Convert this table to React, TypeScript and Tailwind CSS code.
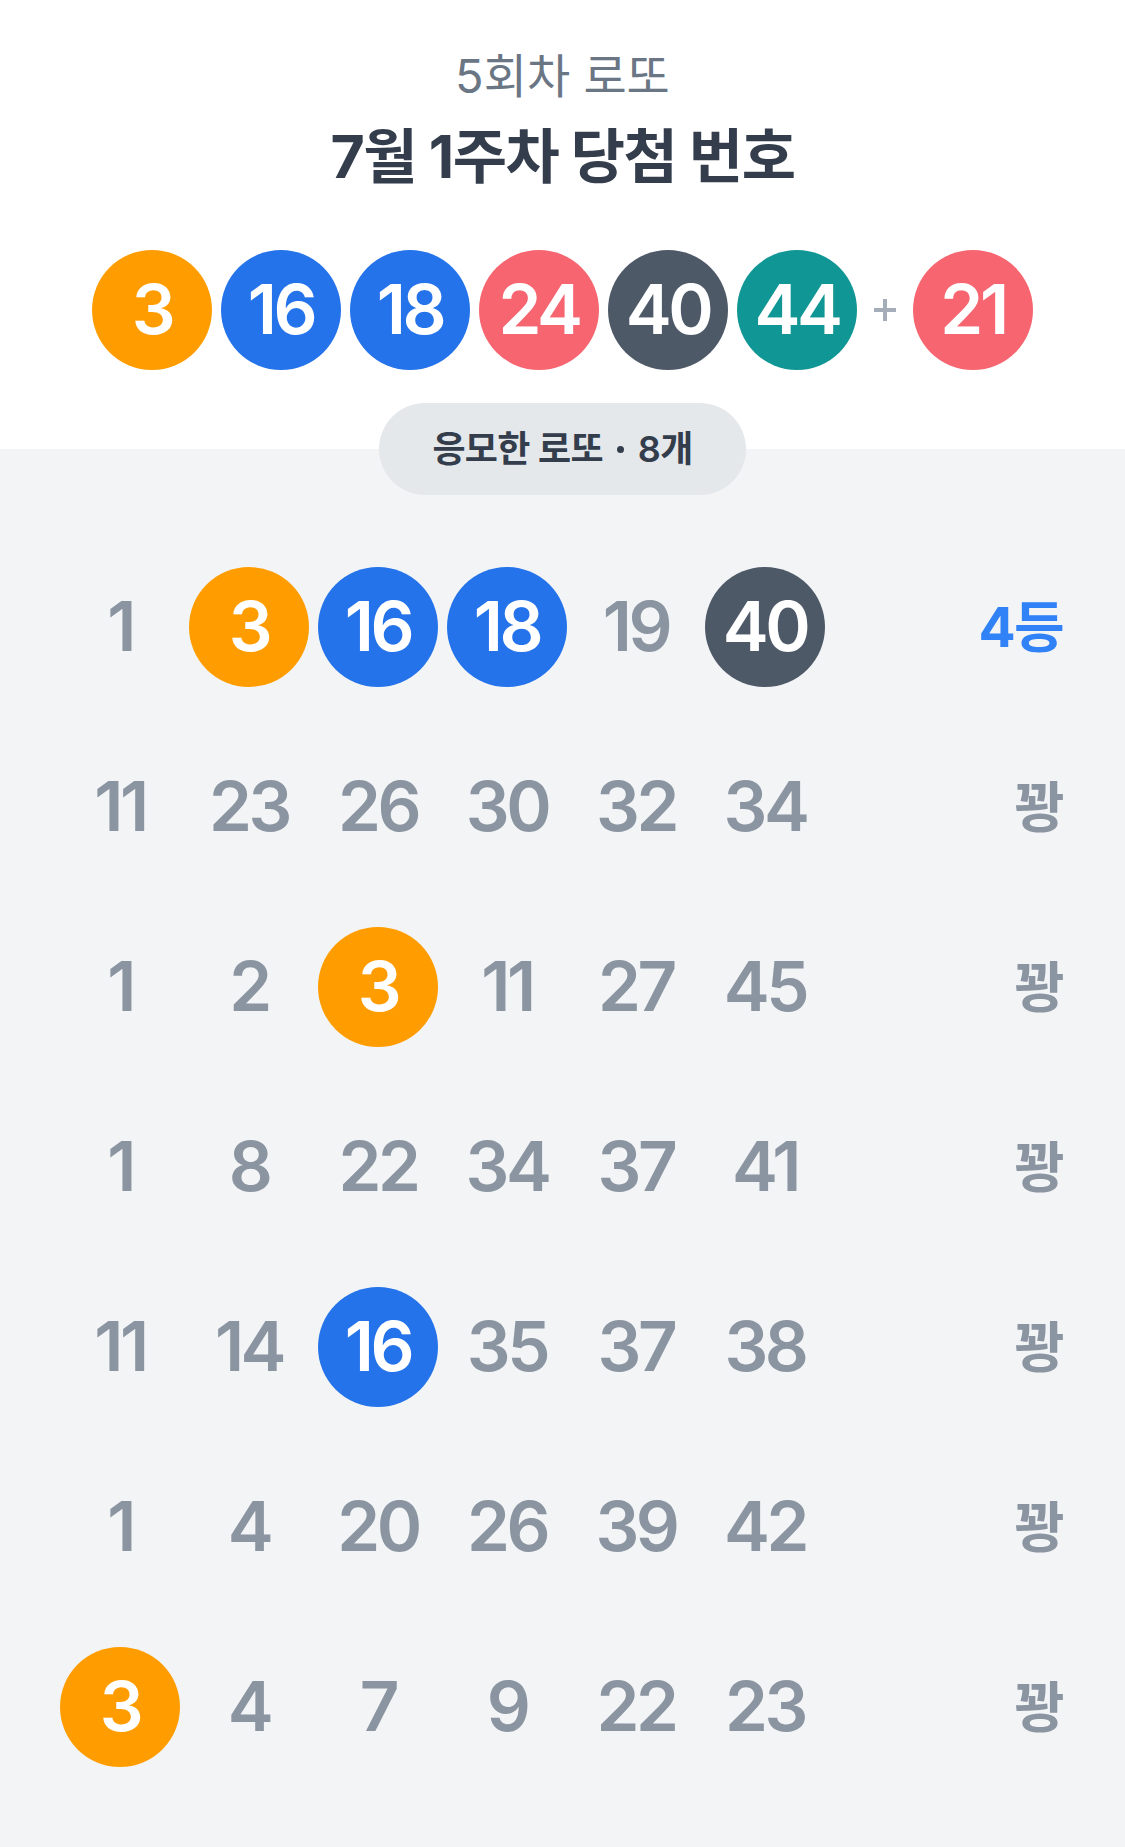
import React from "react";

const FONT = { fontFamily: 'Inter, "Noto Sans CJK KR", sans-serif' };

function ballColor(n: number): string {
  if (n <= 10) return "bg-[#ff9d00]";
  if (n <= 20) return "bg-[#2473ea]";
  if (n <= 30) return "bg-[#f66570]";
  if (n <= 40) return "bg-[#4e5968]";
  return "bg-[#109694]";
}

function Ball({ n }: { n: number }) {
  return (
    <div
      className={`w-[120px] h-[120px] rounded-full flex items-center justify-center text-white text-[69px] font-semibold tracking-[-0.05em] ${ballColor(n)}`}
    >
      {n}
    </div>
  );
}

function Plain({ n }: { n: number }) {
  return (
    <div className="w-[120px] h-[120px] flex items-center justify-center text-[#8b95a1] text-[69px] font-semibold tracking-[-0.05em]">
      {n}
    </div>
  );
}

const winning = [3, 16, 18, 24, 40, 44];
const bonus = 21;

const rows: { nums: number[]; result: string }[] = [
  { nums: [1, 3, 16, 18, 19, 40], result: "4등" },
  { nums: [11, 23, 26, 30, 32, 34], result: "꽝" },
  { nums: [1, 2, 3, 11, 27, 45], result: "꽝" },
  { nums: [1, 8, 22, 34, 37, 41], result: "꽝" },
  { nums: [11, 14, 16, 35, 37, 38], result: "꽝" },
  { nums: [1, 4, 20, 26, 39, 42], result: "꽝" },
  { nums: [3, 4, 7, 9, 22, 23], result: "꽝" },
];

export default function App() {
  return (
    <div className="min-h-screen bg-[#f2f4f6]" style={FONT}>
      <div className="bg-white pt-[48px] pb-[79px] flex flex-col items-center">
        <div className="text-[47px] leading-[56px] text-[#6b7684]">5회차 로또</div>
        <div className="mt-[19px] text-[59px] leading-[68px] font-bold text-[#333d4b] tracking-[-0.025em]">
          7월 1주차 당첨 번호
        </div>
        <div className="mt-[59px] flex items-center gap-[9px]">
          {winning.map((n) => (
            <Ball key={n} n={n} />
          ))}
          <div className="w-[38px] flex items-center justify-center">
            <svg width="26" height="26" viewBox="0 0 26 26">
              <path d="M13 2v22M2 13h22" stroke="#a5aeb8" strokeWidth="4" />
            </svg>
          </div>
          <Ball n={bonus} />
        </div>
      </div>
      <div className="flex flex-col items-center">
        <div className="-mt-[46px] h-[92px] w-[367px] rounded-full bg-[#e5e8eb] flex items-center justify-center text-[36px] font-semibold text-[#333d4b] tracking-[-0.02em]">
          <span>응모한 로또</span>
          <span className="mx-[14px] w-[7px] h-[7px] rounded-full bg-[#333d4b]" />
          <span>8개</span>
        </div>
      </div>
      <div className="pl-[60px] pr-[62px] pt-[42px]">
        {rows.map((r, i) => (
          <div key={i} className="h-[180px] flex items-center">
            <div className="flex items-center gap-[9px]">
              {r.nums.map((n, j) =>
                winning.includes(n) ? <Ball key={j} n={n} /> : <Plain key={j} n={n} />
              )}
            </div>
            <div
              className={`ml-auto text-[55px] font-bold tracking-[-0.03em] ${
                r.result === "꽝" ? "text-[#8b95a1]" : "text-[#3182f6]"
              }`}
            >
              {r.result}
            </div>
          </div>
        ))}
      </div>
    </div>
  );
}
